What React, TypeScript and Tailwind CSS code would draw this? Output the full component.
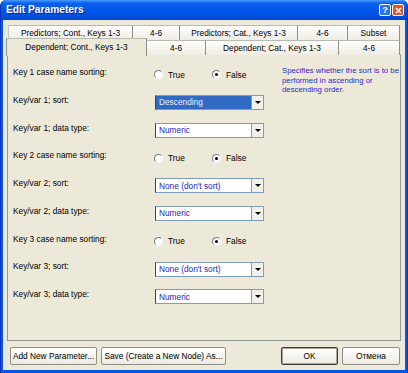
import React from "react";

const FONT = "font-['Liberation_Sans',Arial,sans-serif]";

type Row =
  | { kind: "radio"; label: string }
  | { kind: "combo"; label: string; value: string; selected?: boolean };

const rows: Row[] = [
  { kind: "radio", label: "Key 1 case name sorting:" },
  { kind: "combo", label: "Key/var 1; sort:", value: "Descending", selected: true },
  { kind: "combo", label: "Key/var 1; data type:", value: "Numeric" },
  { kind: "radio", label: "Key 2 case name sorting:" },
  { kind: "combo", label: "Key/var 2; sort:", value: "None (don't sort)" },
  { kind: "combo", label: "Key/var 2; data type:", value: "Numeric" },
  { kind: "radio", label: "Key 3 case name sorting:" },
  { kind: "combo", label: "Key/var 3; sort:", value: "None (don't sort)" },
  { kind: "combo", label: "Key/var 3; data type:", value: "Numeric" },
];

const backRow = [
  { label: "Predictors; Cont., Keys 1-3", w: "w-[125px]" },
  { label: "4-6", w: "w-[47px]" },
  { label: "Predictors; Cat., Keys 1-3", w: "w-[118px]" },
  { label: "4-6", w: "w-[50px]" },
  { label: "Subset", w: "w-[52px]" },
];

const frontRow = [
  { label: "4-6", w: "w-[59px]" },
  { label: "Dependent; Cat., Keys 1-3", w: "w-[133px]" },
  { label: "4-6", w: "w-[61px]" },
];

const tabCls =
  "flex h-full items-center justify-center border-t border-r border-t-[#B9BBB1] border-r-[#8F9189] bg-[linear-gradient(180deg,#FEFEFD,#EEECE4)]";

function Radio({ checked, label }: { checked?: boolean; label: string }) {
  return (
    <div className="flex items-center">
      <div className="flex h-[9px] w-[9px] items-center justify-center rounded-full border border-t-[#7C7C7C] border-l-[#7C7C7C] border-b-[#F4F4F4] border-r-[#F4F4F4] bg-white">
        {checked && <div className="h-[3px] w-[3px] rounded-full bg-black" />}
      </div>
      <span className="ml-[5px]">{label}</span>
    </div>
  );
}

function Combo({ value, selected }: { value: string; selected?: boolean }) {
  return (
    <div className="flex h-[15px] w-[109px] border border-[#7F9DB9] border-l-[#2E3E8E] bg-white">
      <div
        className={
          "flex flex-1 items-center pl-[3px] " +
          (selected ? "bg-[#316AC5] text-[#E8EEFF]" : "text-[#2424B4]")
        }
      >
        {value}
      </div>
      <div className="flex w-[12px] items-center justify-center border-l border-[#9A9A94] bg-[#F1F0EA]">
        <div className="h-0 w-0 border-x-[3px] border-t-[3px] border-x-transparent border-t-black" />
      </div>
    </div>
  );
}

function Btn({ children, w, def }: { children: React.ReactNode; w: string; def?: boolean }) {
  return (
    <div
      className={
        "flex h-[18px] items-center justify-center rounded-[2px] border bg-[linear-gradient(180deg,#FFFFFF,#ECEAE1)] " +
        w +
        (def
          ? " border-[#3A3A36] shadow-[inset_0_0_0_1px_#A9A8A0]"
          : " border-[#8E8D86]")
      }
    >
      {children}
    </div>
  );
}

export default function App() {
  return (
    <div className={`${FONT} h-[373px] w-[408px] bg-white text-[8.3px] text-black`}>
      <div className="flex h-full w-full flex-col rounded-t-[6px] border-x border-[#0A35B8] bg-[#0757E6]">
        {/* title bar */}
        <div className="flex h-[20px] items-center rounded-t-[6px] bg-[linear-gradient(180deg,#4A9BFF_0%,#0C62EE_15%,#0055E6_55%,#0050DE_85%,#0343C8_100%)] pl-[5px] pr-[3px]">
          <span className="text-[10.2px] font-bold text-white [text-shadow:1px_1px_0_#0A2A8A]">
            Edit Parameters
          </span>
          <div className="ml-auto flex items-center gap-[1px]">
            <div className="flex h-[12px] w-[12px] items-center justify-center rounded-[2px] border border-white bg-[#2C72F0] text-[9px] font-bold leading-none text-white">
              ?
            </div>
            <div className="flex h-[12px] w-[12px] items-center justify-center rounded-[2px] border border-white bg-[#E0532C]">
              <svg width="7" height="7" viewBox="0 0 7 7">
                <path d="M1 1L6 6M6 1L1 6" stroke="white" strokeWidth="1.6" />
              </svg>
            </div>
          </div>
        </div>

        {/* body */}
        <div className="mx-[2px] mb-[3px] flex flex-1 flex-col bg-[#ECE9D8] pt-[5px]">
          {/* tabs */}
          <div className="ml-[5px] flex h-[15px] w-[392px]">
            {backRow.map((t, i) => (
              <div key={i} className={`${tabCls} ${t.w} ${i === 0 ? "border-l border-l-[#C6C8BE]" : ""}`}>
                {t.label}
              </div>
            ))}
          </div>
          <div className="relative z-10 ml-[5px] flex h-[15px] w-[392px] items-start">
            <div className="-ml-[2px] -mt-[2px] flex h-[18px] w-[141px] items-start justify-center border-x border-t border-x-[#8F9189] border-t-[#B9BBB1] bg-[#ECE9D8] pt-[2px]">
              Dependent; Cont., Keys 1-3
            </div>
            {frontRow.map((t, i) => (
              <div key={i} className={`${tabCls} ${t.w}`}>
                {t.label}
              </div>
            ))}
          </div>

          {/* panel */}
          <div className="-mt-[1px] ml-[4px] flex h-[287px] w-[394px] border border-[#919B9C] bg-[#ECE9D8] pl-[5px] pt-[4px]">
            <div className="flex w-[251px] flex-col">
              {rows.map((r, i) => (
                <div key={i} className="flex h-[27.75px] items-center">
                  <div className="mb-[1px] w-[142px]">{r.label}</div>
                  <div className="mt-[4px]">
                    {r.kind === "radio" ? (
                      <div className="-ml-[1px] flex items-center">
                        <div className="w-[58px]">
                          <Radio label="True" />
                        </div>
                        <Radio label="False" checked />
                      </div>
                    ) : (
                      <Combo value={r.value} selected={r.selected} />
                    )}
                  </div>
                </div>
              ))}
            </div>
            <div className="ml-[18px] mt-[7px] text-[7.8px] leading-[9.5px] text-[#2A2ACC]">
              Specifies whether the sort is to be
              <br />
              performed in ascending or
              <br />
              descending order.
            </div>
          </div>

          {/* buttons */}
          <div className="mt-[6px] flex items-center pl-[7px] pr-[5px]">
            <Btn w="w-[87px]">Add New Parameter...</Btn>
            <div className="ml-[4px]">
              <Btn w="w-[125px]">Save (Create a New Node) As...</Btn>
            </div>
            <div className="ml-auto">
              <Btn w="w-[57px]" def>
                OK
              </Btn>
            </div>
            <div className="ml-[4px]">
              <Btn w="w-[58px]">Отмена</Btn>
            </div>
          </div>
        </div>
      </div>
    </div>
  );
}
